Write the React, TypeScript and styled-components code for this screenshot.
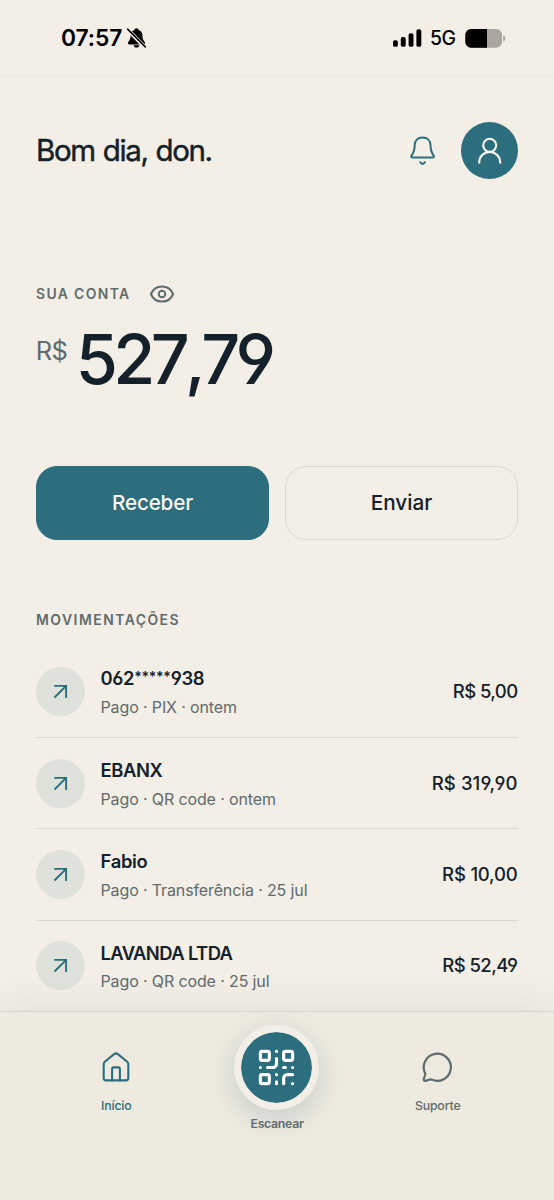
import React from 'react';
import styled, { createGlobalStyle } from 'styled-components';

const color = {
  paper: '#f3eee6',
  bar: '#eeeadf',
  teal: '#2c6e7e',
  ink: '#14212a',
  muted: '#5f6b6d',
  line: '#dcd8d1',
};

const GlobalStyle = createGlobalStyle`
  * { box-sizing: border-box; }
  body {
    margin: 0;
    background: ${color.paper};
    color: ${color.ink};
    font-family: Inter, "Liberation Sans", sans-serif;
    font-feature-settings: "cv03", "cv04";
    -webkit-font-smoothing: antialiased;
  }
  svg { display: block; flex: none; }
`;

const Screen = styled.div`
  height: 1200px;
  display: flex;
  flex-direction: column;
  overflow: hidden;
  background: ${color.paper};
`;

const StatusBar = styled.header`
  flex: none;
  height: 76px;
  padding: 0 48px 0 61px;
  display: flex;
  justify-content: space-between;
  align-items: flex-start;
  border-bottom: 1px solid #ebe6df;
  color: #000;
`;

const StatusGroup = styled.div`
  display: flex;
  align-items: center;
  margin-top: 26px;
  height: 24px;
`;

const Clock = styled.span`
  width: 66px;
  font-size: 22.8px;
  font-weight: 600;
  line-height: 24px;
  letter-spacing: -0.1px;
  font-feature-settings: normal;
`;

const Network = styled.span`
  width: 35px;
  margin-left: 8px;
  font-size: 19.4px;
  font-weight: 500;
  line-height: 25px;
  letter-spacing: -0.6px;
`;

const Content = styled.main`
  flex: 1;
  min-height: 0;
  padding: 46px 36px 0;
  overflow: hidden;
`;

const Greeting = styled.div`
  height: 57px;
  display: flex;
  align-items: center;
  gap: 25px;
`;

const Hello = styled.h1`
  flex: 1;
  margin: -2px 0 0;
  font-size: 29.5px;
  font-weight: 400;
  line-height: 40px;
  letter-spacing: -1.36px;
  word-spacing: 1px;
  -webkit-text-stroke: 0.45px ${color.ink};
`;

const Avatar = styled.div`
  width: 57px;
  height: 57px;
  border-radius: 50%;
  background: ${color.teal};
  display: flex;
  align-items: center;
  justify-content: center;
`;

const Overline = styled.span`
  font-size: 13.9px;
  font-weight: 600;
  line-height: 20px;
  color: ${color.muted};
`;

const AccountLabel = styled.div`
  margin-top: 104.5px;
  display: flex;
  align-items: center;
  gap: 18px;
  height: 20px;
  ${Overline} { letter-spacing: 1.38px; }
`;

const Balance = styled.div`
  display: flex;
  margin: 20px 0 0;
  height: 71px;
`;

const Currency = styled.span`
  width: 40px;
  margin-left: -0.3px;
  font-size: 25.5px;
  font-weight: 400;
  line-height: 54px;
  letter-spacing: -0.7px;
  color: ${color.muted};
`;

const Amount = styled.strong`
  font-size: 68.3px;
  font-weight: 500;
  line-height: 70px;
  letter-spacing: -4.65px;
  font-kerning: none;
`;

const Actions = styled.div`
  margin-top: 71px;
  display: grid;
  grid-template-columns: 1fr 1fr;
  gap: 16px;
`;

const ActionButton = styled.button<{ $primary?: boolean }>`
  height: 74.5px;
  padding: 0;
  border: 1px solid ${p => (p.$primary ? color.teal : color.line)};
  border-radius: 21px;
  background: ${p => (p.$primary ? color.teal : 'transparent')};
  color: ${p => (p.$primary ? '#fbf8f1' : color.ink)};
  font: 500 20.7px Inter, "Liberation Sans", sans-serif;
  letter-spacing: ${p => (p.$primary ? '-0.2px' : '0')};
`;

const SectionTitle = styled.h2`
  margin: 70px 0 15.6px;
  height: 20px;
  line-height: 20px;
  ${Overline} { display: block; letter-spacing: 1.5px; }
`;

const Row = styled.div`
  height: 91.4px;
  display: flex;
  align-items: center;
  gap: 15.5px;
  & + & { border-top: 1px solid ${color.line}; }
`;

const RowIcon = styled.div`
  flex: none;
  width: 49px;
  height: 49px;
  border-radius: 50%;
  background: #dfe2da;
  display: flex;
  align-items: center;
  justify-content: center;
`;

const RowText = styled.div`
  flex: 1;
  display: flex;
  flex-direction: column;
  gap: 4.6px;
  padding-top: 2.4px;
`;

const RowTitle = styled.span<{ $track: number }>`
  font-size: 18.4px;
  font-weight: 600;
  line-height: 24px;
  letter-spacing: ${p => p.$track}px;
`;

const Mask = styled.span`
  font-size: 14px;
  letter-spacing: -0.25px;
  vertical-align: 3px;
  line-height: 1;
`;

const RowMeta = styled.span`
  font-size: 16px;
  line-height: 24px;
  letter-spacing: -0.13px;
  color: ${color.muted};
`;

const RowValue = styled.span<{ $track: number }>`
  margin: -1px 0.5px 0 0;
  font-size: 18.5px;
  font-weight: 500;
  line-height: 24px;
  letter-spacing: ${p => p.$track}px;
`;

const TabBar = styled.nav`
  position: relative;
  flex: none;
  height: 189px;
  padding: 0 36px;
  display: grid;
  grid-template-columns: repeat(3, 1fr);
  background: ${color.bar};
  border-top: 1px solid #d8d5cc;
  box-shadow: 0 -8px 32px rgba(20, 33, 42, 0.06);
`;

const Tab = styled.div<{ $active?: boolean }>`
  display: flex;
  flex-direction: column;
  align-items: center;
  padding-top: 39px;
  gap: 14.5px;
  color: ${p => (p.$active ? color.teal : color.muted)};
`;

const TabLabel = styled.span<{ $strong?: boolean }>`
  font-size: 12.3px;
  font-weight: ${p => (p.$strong ? 600 : 500)};
  line-height: 16px;
  letter-spacing: ${p => (p.$strong ? '-0.3px' : '-0.15px')};
`;

const ScanTab = styled(Tab)`
  padding-top: 13px;
  gap: 6px;
`;

const ScanButton = styled.div`
  width: 85px;
  height: 85px;
  border: 7.5px solid ${color.paper};
  border-radius: 50%;
  background: ${color.teal};
  background-clip: padding-box;
  display: flex;
  align-items: center;
  justify-content: center;
  box-shadow: 0 8px 28px rgba(44, 110, 126, 0.22);
`;

const SilentBell = () => (
  <svg width="19" height="22" viewBox="0 0 19 22">
    <path d="M9.500 1.200c-1.300 0-2 .8-2 1.700-2.500.6-3.900 2.600-3.900 5.200 0 3.800-.7 4.900-2 6.300-.9 1-1 3 .8 3h14.200c1.800 0 1.700-2 .8-3-1.300-1.400-2-2.500-2-6.300 0-2.600-1.400-4.600-3.900-5.200 0-.9-.7-1.700-2-1.700z" fill="#000" />
    <path d="M6.600 18.200h5.800c-.2 1.400-1.400 2.300-2.900 2.300s-2.700-.9-2.900-2.300z" fill="#000" />
    <path d="M-.5 1.600 18 20.300" stroke={color.paper} strokeWidth="3.800" />
    <path d="M.6 2.100 18.300 19.900" stroke="#000" strokeWidth="1.500" strokeLinecap="round" />
  </svg>
);

const Signal = () => (
  <svg width="29" height="18" viewBox="0 0 29 18">
    <rect x="0" y="11.300" width="4.900" height="6.500" rx="1.900" />
    <rect x="7.800" y="8" width="4.900" height="9.800" rx="1.900" />
    <rect x="15.600" y="4.200" width="4.900" height="13.600" rx="1.900" />
    <rect x="23.400" y="0.200" width="4.900" height="17.600" rx="1.900" />
  </svg>
);

const Battery = () => (
  <svg width="41" height="19" viewBox="0 0 41 19">
    <rect x="0.300" y="0" width="36.700" height="18.800" rx="5.800" fill="#aaa69f" />
    <path d="M6.100 0H22v18.800H6.100A5.800 5.800 0 0 1 .3 13V5.800A5.800 5.800 0 0 1 6.100 0z" fill="#000" />
    <path d="M38.200 6.500c1.500.4 2.200 1.500 2.200 2.900s-.7 2.500-2.200 2.900z" fill="#aaa69f" />
  </svg>
);

const BellIcon = () => (
  <svg width="26" height="30" viewBox="0 0 26 30" fill="none" stroke={color.teal} strokeWidth="2" strokeLinecap="round" strokeLinejoin="round">
    <path d="M12.600 1.500c-4.800 0-7.900 3.200-7.900 7.600 0 5-.8 7.300-3 10.300-.8 1.200-.4 2.200.9 2.200h20c1.300 0 1.700-1 .9-2.200-2.200-3-3-5.300-3-10.300 0-4.400-3.100-7.600-7.900-7.600z" />
    <path d="M10.300 26.200c.5 1.200 1.300 1.700 2.300 1.700s1.800-.5 2.300-1.700" />
  </svg>
);

const PersonIcon = () => (
  <svg width="24" height="28" viewBox="0 0 24 28" fill="none" stroke="#fbf8f1" strokeWidth="2.100" strokeLinecap="butt">
    <circle cx="11.700" cy="8.300" r="6.500" />
    <path d="M1.200 26.600v-1c0-5.900 4.500-10.600 10.500-10.600s10.500 4.700 10.500 10.600v1" />
  </svg>
);

const EyeIcon = () => (
  <svg width="26" height="20" viewBox="0 0 26 20" fill="none" stroke={color.muted} strokeWidth="2">
    <path d="M1.900 10C4 4.900 8 2.400 13 2.400S22 4.900 24.100 10C22 15.100 18 17.600 13 17.600S4 15.100 1.900 10z" strokeLinejoin="round" />
    <circle cx="13" cy="10" r="3.300" />
  </svg>
);

const OutArrow = () => (
  <svg width="15" height="15" viewBox="0 0 15 15" fill="none" stroke={color.teal} strokeWidth="1.900">
    <path d="M1.200 1.900H13.100V13.900M13.100 1.900 1.500 13.500" />
  </svg>
);

const HomeIcon = () => (
  <svg width="30" height="32.600" viewBox="0 0 30 32.600" fill="none" stroke={color.teal} strokeWidth="2.100" strokeLinecap="round" strokeLinejoin="round">
    <path d="M2.700 12.900c0-.9.400-1.600 1.100-2.200L13.100 3.100c1.200-1 2.600-1 3.800 0l9.300 7.600c.7.600 1.100 1.300 1.100 2.200v14.200c0 1.500-.8 2.300-2.300 2.300H5c-1.500 0-2.300-.8-2.300-2.300z" />
    <path d="M11.100 29.400V17.900c0-1 .5-1.500 1.500-1.500h4.800c1 0 1.500.5 1.500 1.500v11.500" />
  </svg>
);

const QrIcon = () => (
  <svg width="43" height="43" viewBox="0 0 24 24" fill="none" stroke="#fff" strokeWidth="1.750" strokeLinecap="round" strokeLinejoin="round">
    <rect width="5" height="5" x="3" y="3" rx="1" />
    <rect width="5" height="5" x="16" y="3" rx="1" />
    <rect width="5" height="5" x="3" y="16" rx="1" />
    <path d="M21 16h-3a2 2 0 0 0-2 2v3M21 21v.01M12 7v3a2 2 0 0 1-2 2H7M3 12h.01M12 3h.01M12 16v.01M16 12h1M21 12v.01M12 21v-1" />
  </svg>
);

const ChatIcon = () => (
  <svg width="32.600" height="32.600" viewBox="0 0 24 24" fill="none" stroke={color.muted} strokeWidth="1.650" strokeLinecap="round" strokeLinejoin="round">
    <path d="M2.992 16.342a2 2 0 0 1 .094 1.167l-1.065 3.290a1 1 0 0 0 1.236 1.168l3.413-.998a2 2 0 0 1 1.099.092 10 10 0 1 0-4.777-4.719" />
  </svg>
);

const movements = [
  { title: <>062<Mask>*****</Mask>938</>, track: -0.35, meta: 'Pago · PIX · ontem', value: 'R$ 5,00', valueTrack: -0.6 },
  { title: 'EBANX', track: -0.4, meta: 'Pago · QR code · ontem', value: 'R$ 319,90', valueTrack: 0.1 },
  { title: 'Fabio', track: -0.3, meta: 'Pago · Transferência · 25 jul', value: 'R$ 10,00', valueTrack: -0.2 },
  { title: 'LAVANDA LTDA', track: -0.6, meta: 'Pago · QR code · 25 jul', value: 'R$ 52,49', valueTrack: -0.55 },
];

export default function App() {
  return (
    <Screen>
      <GlobalStyle />
      <StatusBar>
        <StatusGroup>
          <Clock>07:57</Clock>
          <SilentBell />
        </StatusGroup>
        <StatusGroup>
          <Signal />
          <Network>5G</Network>
          <Battery />
        </StatusGroup>
      </StatusBar>
      <Content>
        <Greeting>
          <Hello>Bom dia, don.</Hello>
          <BellIcon />
          <Avatar><PersonIcon /></Avatar>
        </Greeting>
        <AccountLabel>
          <Overline>SUA CONTA</Overline>
          <EyeIcon />
        </AccountLabel>
        <Balance>
          <Currency>R$</Currency>
          <Amount>527,79</Amount>
        </Balance>
        <Actions>
          <ActionButton $primary>Receber</ActionButton>
          <ActionButton>Enviar</ActionButton>
        </Actions>
        <SectionTitle><Overline>MOVIMENTAÇÕES</Overline></SectionTitle>
        {movements.map(m => (
          <Row key={m.value}>
            <RowIcon><OutArrow /></RowIcon>
            <RowText>
              <RowTitle $track={m.track}>{m.title}</RowTitle>
              <RowMeta>{m.meta}</RowMeta>
            </RowText>
            <RowValue $track={m.valueTrack}>{m.value}</RowValue>
          </Row>
        ))}
      </Content>
      <TabBar>
        <Tab $active>
          <HomeIcon />
          <TabLabel>Início</TabLabel>
        </Tab>
        <ScanTab>
          <ScanButton><QrIcon /></ScanButton>
          <TabLabel $strong>Escanear</TabLabel>
        </ScanTab>
        <Tab>
          <ChatIcon />
          <TabLabel>Suporte</TabLabel>
        </Tab>
      </TabBar>
    </Screen>
  );
}
